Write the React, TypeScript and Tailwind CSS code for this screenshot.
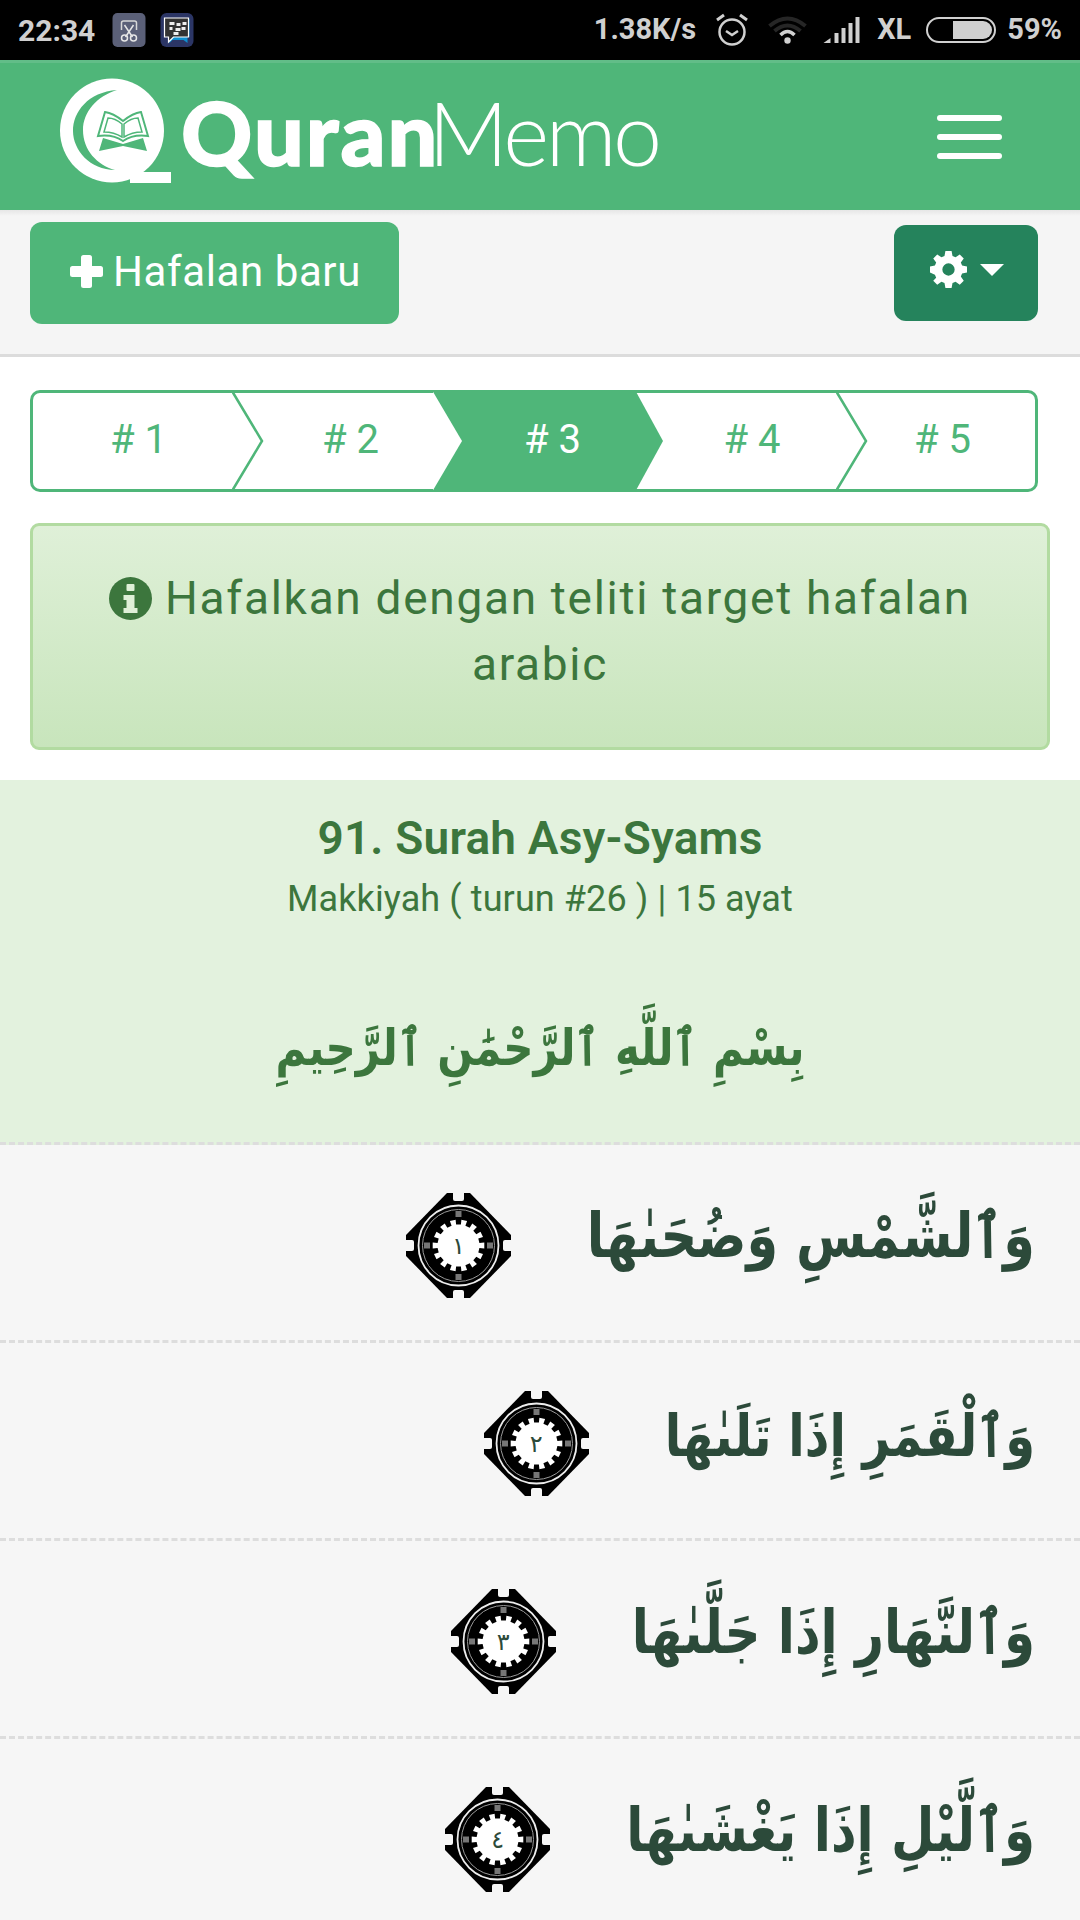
const GREEN = "#4fb679";

const Tip = ({ kind }: { kind: "line" | "white" | "green" }) => (
  <svg className="absolute left-full -top-[3px] z-10 h-[102px] w-[32px]" viewBox="0 0 32 102" fill="none">
    {kind === "green" ? <path d="M-1 0 L27 51 L-1 102 Z" fill={GREEN} /> : null}
    {kind === "white" ? <path d="M-1 0 L29 51 L-1 102 Z" fill="#fff" /> : null}
    {kind === "line" ? <path d="M0 1 L30 51 L0 101" stroke={GREEN} strokeWidth="2.5" /> : null}
  </svg>
);

const steps = [
  { label: "# 1", w: "w-[202px]", pad: "pl-[12px]", tip: "line" as const, extra: "rounded-l-[10px] border-l-[3px]" },
  { label: "# 2", w: "w-[201px]", pad: "pl-[36px]", tip: "white" as const, extra: "" },
  { label: "# 3", w: "w-[203px]", pad: "pl-[36px]", tip: "green" as const, extra: "bg-[#4fb679] text-white" },
  { label: "# 4", w: "w-[200px]", pad: "pl-[32px]", tip: "line" as const, extra: "" },
  { label: "# 5", w: "w-[202px]", pad: "pl-[14px]", tip: null, extra: "rounded-r-[10px] border-r-[3px]" },
];

function gearPath(cx: number, cy: number, inner: number, outer: number, teeth: number) {
  const pts: string[] = [];
  const step = (Math.PI * 2) / teeth;
  for (let i = 0; i < teeth; i++) {
    const a = i * step;
    const q = step / 4;
    const list: [number, number][] = [
      [inner, a - q],
      [outer, a - q],
      [outer, a + q],
      [inner, a + q],
    ];
    for (const [r, t] of list) {
      pts.push(`${(cx + r * Math.cos(t)).toFixed(1)} ${(cy + r * Math.sin(t)).toFixed(1)}`);
    }
  }
  return `M${pts.join(" L")} Z`;
}

const GEAR = gearPath(52.5, 52.5, 21, 26, 14);

const Ornament = ({ n }: { n: string }) => (
  <span className="relative inline-flex h-[105px] w-[105px] shrink-0 items-center justify-center">
    <svg className="absolute inset-0" viewBox="0 0 105 105" width="105" height="105">
      <defs>
        <filter id="soft">
          <feGaussianBlur stdDeviation="0.6" />
        </filter>
      </defs>
      <g filter="url(#soft)">
        <path d="M41 0 H64 L105 42 V63 L64 105 H41 L0 63 V42 Z" fill="#000" />
        <rect x="47" y="-2" width="11" height="10" rx="2" fill="#f6f6f6" />
        <rect x="47" y="97" width="11" height="10" rx="2" fill="#f6f6f6" />
        <rect x="-2" y="47" width="10" height="11" rx="2" fill="#f6f6f6" />
        <rect x="97" y="47" width="10" height="11" rx="2" fill="#f6f6f6" />
        <circle cx="52.5" cy="52.5" r="40" fill="none" stroke="#ededed" strokeWidth="1.800" />
        <circle cx="52.5" cy="52.5" r="36" fill="none" stroke="#9a9a9a" strokeWidth="1" />
        <path d={GEAR} fill="#fff" />
        <rect x="49.500" y="18" width="6" height="6" fill="#777" />
        <rect x="49.500" y="81" width="6" height="6" fill="#777" />
        <rect x="18" y="49.500" width="6" height="6" fill="#777" />
        <rect x="81" y="49.500" width="6" height="6" fill="#777" />
      </g>
    </svg>
    <span className="relative text-[24px] font-normal leading-none text-[#2c4a3a]">{n}</span>
  </span>
);

const verses = [
  { text: "وَٱلشَّمْسِ وَضُحَىٰهَا", n: "١", size: "text-[51px]" },
  { text: "وَٱلْقَمَرِ إِذَا تَلَىٰهَا", n: "٢", size: "text-[48px]" },
  { text: "وَٱلنَّهَارِ إِذَا جَلَّىٰهَا", n: "٣", size: "text-[50px]" },
  { text: "وَٱلَّيْلِ إِذَا يَغْشَىٰهَا", n: "٤", size: "text-[50px]" },
];

export default function App() {
  return (
    <div className="flex h-[1920px] w-[1080px] flex-col overflow-hidden bg-white font-['Roboto','DejaVu_Sans',sans-serif]">
      {/* status bar */}
      <div className="flex h-[60px] shrink-0 items-center bg-black pl-[18px] pr-[18px] text-[29px] font-bold text-[#d0d0d0]">
        <span className="text-[30px]">22:34</span>
        <svg className="ml-[17px]" width="34" height="34" viewBox="0 0 33 34">
          <rect width="33" height="34" rx="5" fill="#5b6078" />
          <path d="M9 17 V10 Q9 8 11 8 H22 Q24 8 24 10 V17" fill="none" stroke="#d8d8d8" strokeWidth="1.5" />
          <path d="M12 12 L20 24 M21 12 L13 24" stroke="#e6e6e6" strokeWidth="1.5" />
          <circle cx="12" cy="25" r="3" fill="none" stroke="#e6e6e6" strokeWidth="1.5" />
          <circle cx="21" cy="25" r="3" fill="none" stroke="#e6e6e6" strokeWidth="1.5" />
        </svg>
        <svg className="ml-[14px]" width="34" height="34" viewBox="0 0 33 34">
          <rect width="33" height="34" rx="6" fill="#2b3565" />
          <path d="M12 27 L23 27 L27 30 V24 H29 V6 H8 V25 L9 30 Z" fill="#0f8fd0" />
          <path d="M4 5 H28 V24 H13 L8 29 V24 H4 Z" fill="#333" stroke="#fff" strokeWidth="1.2" />
          <path d="M9 9h5v3H9zM16 10h4v3h-4zM22 9h4v3h-4zM9 14h3v3H9zM15 15h5v3h-5zM21 14h4v3h-4zM13 19h5v3h-5z" fill="#eee" />
        </svg>
        <span className="ml-auto">1.38K/s</span>
        <svg className="ml-[20px]" width="32" height="34" viewBox="0 0 32 34" fill="none" stroke="#d0d0d0">
          <circle cx="16" cy="19" r="12.5" strokeWidth="2.5" />
          <path d="M10 18 L16 22 L22 18" strokeWidth="2.5" />
          <path d="M1 7 L8 2 M31 7 L24 2" strokeWidth="3" />
        </svg>
        <svg className="ml-[20px]" width="39" height="30" viewBox="0 0 38 30" fill="none">
          <path d="M1 11 Q19 -4 37 11" stroke="#262626" strokeWidth="4" />
          <path d="M6 16 Q19 5 32 16" stroke="#262626" strokeWidth="4" />
          <path d="M12 20 Q19 13 26 20" stroke="#d0d0d0" strokeWidth="3.5" />
          <circle cx="19" cy="25.5" r="3.2" fill="#d0d0d0" />
        </svg>
        <svg className="ml-[16px]" width="37" height="26" viewBox="0 0 36 26" fill="#d0d0d0">
          <path d="M0 26 L7 21 V26 Z" />
          <rect x="11" y="16" width="4" height="10" />
          <rect x="18" y="11" width="4" height="15" />
          <rect x="25" y="6" width="4" height="20" />
          <rect x="32" y="0" width="4" height="26" />
        </svg>
        <span className="ml-[17px]">XL</span>
        <span className="relative ml-[15px] h-[26px] w-[70px] rounded-full border-[2px] border-[#d0d0d0]">
          <span className="absolute bottom-[2px] right-[2px] top-[2px] w-[39px] rounded-r-full bg-[#d0d0d0]" />
        </span>
        <span className="ml-[11px]">59%</span>
      </div>

      {/* navbar */}
      <div className="relative flex h-[150px] shrink-0 items-center border-t-[3px] border-[#62bd88] bg-[#4fb679]">
        <svg className="absolute left-[60px] top-[15px]" width="111" height="105" viewBox="60 78 111 105">
          <circle cx="112" cy="130.500" r="52" fill="#fff" />
          <rect x="130" y="172" width="41" height="11" fill="#fff" />
          <path d="M117 90 C88 92 73 112 73 131 C73 150 90 170 115 170 C97 165 83 150 83 130 C83 112 97 96 117 90Z" fill={GREEN} />
          <path d="M123 121 Q113 113 105 112 L98 136 Q113 134 123 141 Q133 134 148 136 L141 112 Q133 113 123 121Z" fill="none" stroke={GREEN} strokeWidth="2" />
          <path d="M122 124 Q115 118 108 118 L104 132 Q114 132 122 137Z" fill="none" stroke={GREEN} strokeWidth="1.500" />
          <path d="M124 124 Q131 118 138 118 L142 132 Q132 132 124 137Z" fill="none" stroke={GREEN} strokeWidth="1.500" />
          <path d="M99 151 L103 138 L123 144 L143 138 L147 151 L123 146Z" fill={GREEN} />
        </svg>
        <div className="ml-[181px] mt-[-10px] flex items-baseline font-['Lato',sans-serif] text-[88px] leading-none text-white">
          <span className="font-black tracking-[2px] [-webkit-text-stroke:1.5px_white]">Quran</span>
          <span className="-ml-[11px] font-light tracking-[-3.5px]">Memo</span>
        </div>
        <div className="ml-auto mr-[78px] flex flex-col gap-[13px]">
          <span className="h-[6px] w-[65px] rounded-full bg-white" />
          <span className="h-[6px] w-[65px] rounded-full bg-white" />
          <span className="h-[6px] w-[65px] rounded-full bg-white" />
        </div>
      </div>

      {/* toolbar */}
      <div className="relative flex h-[147px] shrink-0 items-start justify-between border-b-[3px] border-[#dcdcdc] bg-[#f5f5f5] pl-[30px] pr-[42px]">
        <div className="absolute inset-x-0 top-0 h-[6px] bg-gradient-to-b from-[#e6e6e6] to-[#f5f5f5]" />
        <button className="relative mt-[12px] flex h-[102px] w-[369px] items-center rounded-[12px] bg-[#4fb679] pb-[4px] pl-[40px] text-[42px] tracking-[0.6px] text-white">
          <svg className="mr-[10px]" width="33" height="33" viewBox="0 0 33 33" fill="#fff">
            <rect x="11" y="0" width="11" height="33" rx="2.5" />
            <rect x="0" y="11" width="33" height="11" rx="2.5" />
          </svg>
          Hafalan baru
        </button>
        <button className="relative mt-[15px] flex h-[96px] w-[144px] items-center rounded-[12px] bg-[#25835c] pb-[8px] pl-[36px] text-white">
          <svg width="37" height="37" viewBox="0 0 24 24" fill="#fff" fillRule="evenodd">
            <path d="M10 0h4l.6 3.2 2 .8L19.300 2.200l2.600 2.600L20 7.400l.8 2L24 10v4l-3.200.6-.8 2 1.900 2.700-2.600 2.600-2.700-1.900-2 .8L14 24h-4l-.6-3.200-2-.8-2.700 1.900-2.600-2.600L4 17.400l-.8-2L0 14v-4l3.200-.6.8-2-1.900-2.600 2.600-2.600 2.700 1.800 2-.8zM12 8a4 4 0 100 8 4 4 0 000-8z" />
          </svg>
          <span className="ml-[13px] mt-[2px] h-0 w-0 border-x-[12px] border-t-[12px] border-x-transparent border-t-white" />
        </button>
      </div>

      {/* steps */}
      <div className="ml-[30px] mt-[33px] flex h-[102px] w-[1008px] shrink-0 text-[40px] tracking-[0px] text-[#4fb679]">
        {steps.map((s) => (
          <div
            key={s.label}
            className={`relative flex h-full shrink-0 items-center justify-center border-y-[3px] border-[#4fb679] pb-[2px] ${s.w} ${s.pad} ${s.extra}`}
          >
            {s.label}
            {s.tip ? <Tip kind={s.tip} /> : null}
          </div>
        ))}
      </div>

      {/* alert */}
      <div className="ml-[30px] mt-[31px] h-[227px] w-[1020px] shrink-0 rounded-[9px] border-[3px] border-[#b2dba1] bg-gradient-to-b from-[#dff0d8] to-[#c8e5bc] px-[50px] pt-[39px] text-center text-[46px] leading-[66px] tracking-[1.7px] text-[#3c763d]">
        <svg className="mr-[13px] inline-block -translate-y-[3px]" width="43" height="43" viewBox="0 0 43 43">
          <circle cx="21.500" cy="21.500" r="21.500" fill="#3c763d" />
          <rect x="17.500" y="7" width="8" height="7" rx="1" fill="#dff0d8" />
          <path d="M14.500 18 H25.500 V31 H28.500 V36 H14.500 V31 H17.500 V23 H14.500 Z" fill="#dff0d8" />
        </svg>
        Hafalkan dengan teliti target hafalan arabic
      </div>

      {/* surah header */}
      <div className="mt-[30px] flex h-[365px] shrink-0 flex-col items-center border-b-[3px] border-dashed border-[#dddddd] bg-[#e3f2de] pt-[30px] text-[#3c763d]">
        <div className="text-[46px] font-semibold leading-[56px] tracking-[0.2px]">91. Surah Asy-Syams</div>
        <div className="mt-[10px] text-[36px] leading-[46px] tracking-[0.1px]">Makkiyah ( turun #26 ) | 15 ayat</div>
        <div dir="rtl" className="mt-[76px] origin-center scale-y-[1.2] font-['DejaVu_Sans',sans-serif] text-[42px] font-bold leading-[100px]">
          بِسْمِ ٱللَّهِ ٱلرَّحْمَٰنِ ٱلرَّحِيمِ
        </div>
      </div>

      {/* verses */}
      <div className="flex-1 bg-[#f6f6f6]">
        {verses.map((v) => (
          <div
            key={v.n}
            dir="rtl"
            className={`flex h-[198px] items-center gap-[76px] border-b-[3px] border-dashed border-[#dddddd] pr-[45px] pt-[6px] font-['DejaVu_Sans',sans-serif] font-bold text-[#2c4a3a] ${v.size}`}
          >
            <span className="-translate-y-[8px] scale-y-[1.2]">{v.text}</span>
            <Ornament n={v.n} />
          </div>
        ))}
      </div>
    </div>
  );
}
